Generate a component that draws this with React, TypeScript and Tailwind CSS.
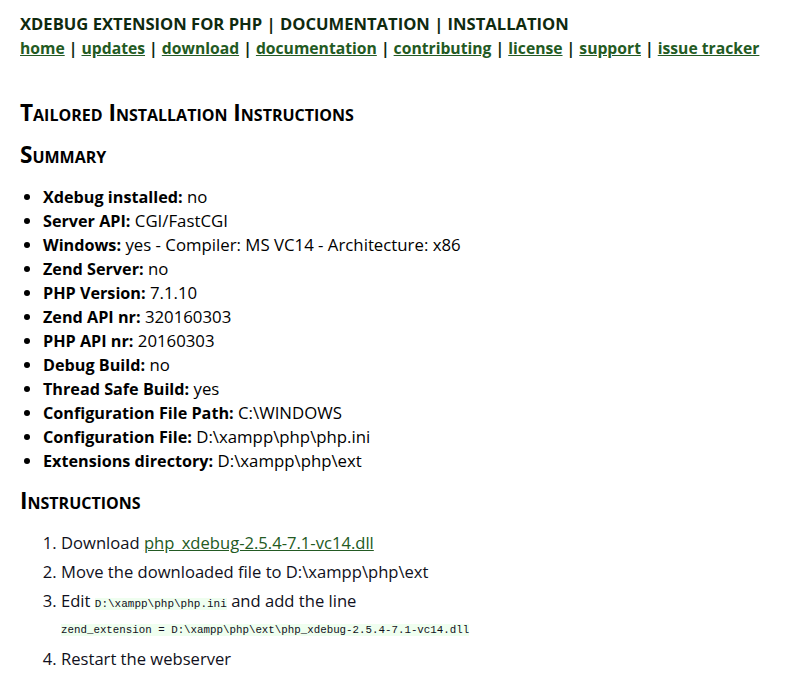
import React from "react";

const links = ["home", "updates", "download", "documentation", "contributing", "license", "support", "issue tracker"];

const summary: [string, string][] = [
  ["Xdebug installed:", "no"],
  ["Server API:", "CGI/FastCGI"],
  ["Windows:", "yes - Compiler: MS VC14 - Architecture: x86"],
  ["Zend Server:", "no"],
  ["PHP Version:", "7.1.10"],
  ["Zend API nr:", "320160303"],
  ["PHP API nr:", "20160303"],
  ["Debug Build:", "no"],
  ["Thread Safe Build:", "yes"],
  ["Configuration File Path:", "C:\\WINDOWS"],
  ["Configuration File:", "D:\\xampp\\php\\php.ini"],
  ["Extensions directory:", "D:\\xampp\\php\\ext"],
];

export default function App() {
  return (
    <div className="min-h-[679px] bg-white px-5 pt-[12px] font-['Open_Sans','Noto_Sans',sans-serif] text-black">
      <div className="whitespace-nowrap text-[16.6px] font-bold leading-[24px] text-[#0f2a0f]">
        XDEBUG EXTENSION FOR PHP | DOCUMENTATION | INSTALLATION
      </div>
      <div className="whitespace-nowrap text-[15.7px] font-bold leading-[25px] text-[#0f2a0f]">
        {links.map((l, i) => (
          <React.Fragment key={l}>
            {i > 0 && " | "}
            <a href="#" className="text-[#235a23] underline">
              {l}
            </a>
          </React.Fragment>
        ))}
      </div>
      <h1 className="mt-[38px] text-[22.6px] font-bold leading-[28px] [font-variant:small-caps]">
        Tailored Installation Instructions
      </h1>
      <h2 className="mt-[14px] text-[22.6px] font-bold leading-[28px] [font-variant:small-caps]">Summary</h2>
      <ul className="mt-[16px] list-disc pl-[23px] text-[16.8px] leading-[24px]">
        {summary.map(([k, v]) => (
          <li key={k}>
            <b className="text-[16.2px]">{k}</b> {v}
          </li>
        ))}
      </ul>
      <h2 className="mt-[14px] text-[22.6px] font-bold leading-[28px] [font-variant:small-caps]">Instructions</h2>
      <ol className="mt-[13px] list-decimal pl-[41px] text-[16.6px] leading-[29px] text-[#101020]">
        <li>
          Download{" "}
          <a href="#" className="text-[#235a23] underline">
            php_xdebug-2.5.4-7.1-vc14.dll
          </a>
        </li>
        <li>Move the downloaded file to D:\xampp\php\ext</li>
        <li>
          Edit{" "}
          <code className="bg-[#effeef] font-['Liberation_Mono',monospace] text-[11px]">D:\xampp\php\php.ini</code> and add the line
          <div className="pb-[4px] text-[10.8px] leading-[20px]">
            <code className="bg-[#effeef] font-['Liberation_Mono',monospace]">
              zend_extension = D:\xampp\php\ext\php_xdebug-2.5.4-7.1-vc14.dll
            </code>
          </div>
        </li>
        <li>Restart the webserver</li>
      </ol>
    </div>
  );
}
